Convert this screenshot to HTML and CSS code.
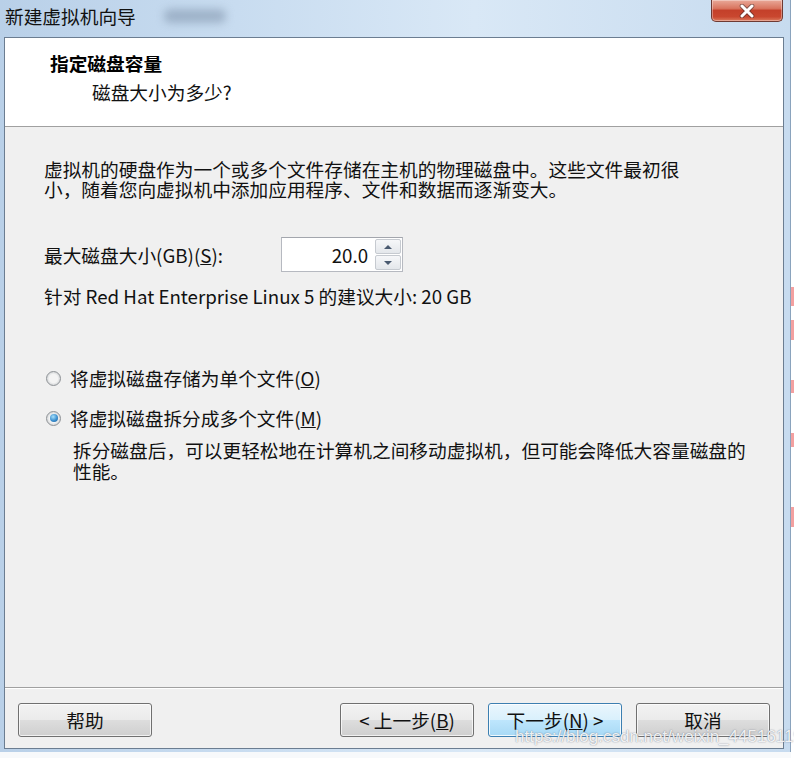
FILE: index.html
```html
<!DOCTYPE html>
<html lang="zh-CN">
<head>
<meta charset="utf-8">
<title>新建虚拟机向导</title>
<link rel="stylesheet" href="styles.css">
</head>
<body>
<div class="page">
  <div class="window">
    <div class="titlebar">
      <span class="title">新建虚拟机向导</span>
      <span class="smudge"></span>
      <button class="close" aria-label="关闭">
        <svg width="20" height="14" viewBox="0 0 20 14">
          <path d="M5 2 L15 12 M15 2 L5 12" stroke="#3a2a2a" stroke-width="4.6" stroke-linecap="round" fill="none" opacity="0.55"/>
          <path d="M5 2 L15 12 M15 2 L5 12" stroke="#ffffff" stroke-width="3" stroke-linecap="round" fill="none"/>
        </svg>
      </button>
    </div>
    <div class="content">
      <div class="header">
        <div class="h-title">指定磁盘容量</div>
        <div class="h-sub">磁盘大小为多少?</div>
      </div>
      <div class="body">
        <p class="intro">虚拟机的硬盘作为一个或多个文件存储在主机的物理磁盘中。这些文件最初很<br>小，随着您向虚拟机中添加应用程序、文件和数据而逐渐变大。</p>
        <div class="size-row">
          <span class="size-label">最大磁盘大小(GB)(<u>S</u>):</span>
          <div class="spinner">
            <span class="spin-value">20.0</span>
            <div class="spin-btns">
              <span class="spin-btn"><span class="tri-up"></span></span>
              <span class="spin-btn"><span class="tri-down"></span></span>
            </div>
          </div>
        </div>
        <p class="recommend">针对 Red Hat Enterprise Linux 5 的建议大小: 20 GB</p>
        <div class="radio-row first">
          <span class="radio"></span>
          <span>将虚拟磁盘存储为单个文件(<u>O</u>)</span>
        </div>
        <div class="radio-row second">
          <span class="radio checked"></span>
          <span>将虚拟磁盘拆分成多个文件(<u>M</u>)</span>
        </div>
        <p class="desc">拆分磁盘后，可以更轻松地在计算机之间移动虚拟机，但可能会降低大容量磁盘的<br>性能。</p>
      </div>
      <div class="footer">
        <button class="btn">帮助</button>
        <div class="spacer"></div>
        <button class="btn">&lt; 上一步(<u>B</u>)</button>
        <button class="btn primary">下一步(<u>N</u>) &gt;</button>
        <button class="btn">取消</button>
        <span class="watermark">https://blog.csdn.net/weixin_44516119</span>
      </div>
    </div>
  </div>
  <div class="edge"></div>
</div>
</body>
</html>
```
FILE: styles.css
```css
html, body {
  margin: 0;
  padding: 0;
  background: #f7f9fb;
}
body {
  font-family: "Noto Sans CJK SC", "Noto Sans", sans-serif;
  color: #111;
  font-size: 18.7px;
}
.page {
  display: flex;
  width: 794px;
  height: 758px;
  overflow: hidden;
}
.window {
  width: 791px;
  height: 752px;
  box-sizing: border-box;
  padding: 0 6px 3px 4px;
  display: flex;
  flex-direction: column;
  background: linear-gradient(to right, #b9d0e8 0%, #c8dcf0 30%, #d9e8f6 60%, #c7dbef 100%);
  border-right: 1px solid #8aa3bd;
}
.edge {
  width: 3px;
  height: 758px;
  background:
    linear-gradient(to bottom,
      #fff 0, #fff 287px, #f3a0a0 287px, #f3a0a0 306px,
      #fff 306px, #fff 320px, #f3a0a0 320px, #f3a0a0 340px,
      #fff 340px, #fff 380px, #f3a0a0 380px, #f3a0a0 393px,
      #fff 393px, #fff 433px, #f3a0a0 433px, #f3a0a0 447px,
      #fff 447px, #fff 507px, #f3a0a0 507px, #f3a0a0 527px,
      #fff 527px);
}
.titlebar {
  height: 37px;
  display: flex;
  align-items: flex-start;
  position: relative;
}
.title {
  margin: 4px 0 0 1px;
  line-height: 24px;
  font-size: 18.7px;
  color: #111;
}
.smudge {
  width: 62px;
  height: 14px;
  margin: 9px 0 0 28px;
  background: rgba(110, 130, 155, 0.45);
  filter: blur(4px);
  border-radius: 6px;
}
.close {
  position: absolute;
  right: 1px;
  top: 0;
  width: 72px;
  height: 22px;
  padding: 0;
  border: 1px solid #6e3a33;
  border-top: none;
  border-radius: 0 0 5px 5px;
  background: linear-gradient(#e9a999 0%, #d9755f 40%, #c4402a 50%, #c9472f 80%, #dc7a5d 100%);
  display: flex;
  align-items: center;
  justify-content: center;
  box-shadow: inset 0 0 0 1px rgba(255,255,255,0.35);
}
.content {
  flex: 1;
  border: 1px solid #6b7d91;
  background: #f0f0f0;
  display: flex;
  flex-direction: column;
}
.header {
  height: 89px;
  box-sizing: border-box;
  background: #fff;
  border-bottom: 1px solid #a0a0a0;
  padding: 14px 0 0 45px;
}
.h-title {
  font-weight: bold;
  line-height: 22px;
  color: #000;
}
.h-sub {
  margin: 7px 0 0 42px;
  line-height: 22px;
}
.body {
  flex: 1;
  padding: 32px 0 0 39px;
  border-bottom: 1px solid #a0a0a0;
}
.body p {
  margin: 0;
}
.intro {
  line-height: 20px;
}
.size-row {
  display: flex;
  align-items: center;
  margin-top: 38px;
  height: 35px;
}
.size-label {
  width: 237px;
}
.spinner {
  width: 122px;
  height: 35px;
  box-sizing: border-box;
  border: 1px solid #b6b9c0;
  border-top-color: #a3a6ad;
  background: #fff;
  display: flex;
  align-items: center;
  justify-content: flex-end;
  padding: 1px 1px 1px 0;
}
.spin-value {
  margin-right: 7px;
  line-height: 22px;
}
.spin-btns {
  width: 26px;
  height: 31px;
  display: flex;
  flex-direction: column;
  gap: 1px;
}
.spin-btn {
  flex: 1;
  border: 1px solid #c6cad0;
  border-radius: 2px;
  background: linear-gradient(#f6f7f9, #e4e7eb);
  display: flex;
  align-items: center;
  justify-content: center;
}
.tri-up {
  width: 0;
  height: 0;
  border-left: 4px solid transparent;
  border-right: 4px solid transparent;
  border-bottom: 4px solid #4a5a70;
}
.tri-down {
  width: 0;
  height: 0;
  border-left: 4px solid transparent;
  border-right: 4px solid transparent;
  border-top: 4px solid #4a5a70;
}
.recommend {
  margin-top: 14px !important;
  line-height: 20px;
}
.radio-row {
  display: flex;
  align-items: center;
  gap: 9px;
  line-height: 22px;
  height: 22px;
}
.radio-row.first {
  margin-top: 61px;
}
.radio-row.second {
  margin-top: 18px;
}
.radio {
  width: 15px;
  height: 15px;
  box-sizing: border-box;
  border-radius: 50%;
  border: 1px solid #8e9296;
  background: radial-gradient(circle at 50% 50%, #f4f4f4 0, #f4f4f4 45%, #d8dadc 70%, #eeeeee 100%);
  margin-left: 2px;
  display: flex;
  align-items: center;
  justify-content: center;
}
.radio.checked::after {
  content: "";
  width: 8px;
  height: 8px;
  border-radius: 50%;
  background: radial-gradient(circle at 40% 35%, #a6e0fb 0, #3b8fcf 55%, #1a5d97 100%);
}
.desc {
  margin: 10px 0 0 29px !important;
  line-height: 21px;
}
.footer {
  height: 60px;
  box-sizing: border-box;
  border-top: 1px solid #fff;
  padding: 14px 13px 0 13px;
  display: flex;
  align-items: flex-start;
  gap: 14px;
  position: relative;
}
.spacer {
  flex: 1;
}
.btn {
  width: 134px;
  height: 34px;
  box-sizing: border-box;
  border: 1px solid #707070;
  border-radius: 3px;
  background: linear-gradient(#f2f2f2 0%, #ebebeb 50%, #dddddd 51%, #cfcfcf 100%);
  box-shadow: inset 0 0 0 1px rgba(255,255,255,0.7);
  font-family: "Noto Sans CJK SC", "Noto Sans", sans-serif;
  font-size: 18.7px;
  color: #111;
  padding: 0;
  line-height: 30px;
}
.btn.primary {
  border-color: #3c7fb1;
  background: linear-gradient(#eaf6fd 0%, #d9f0fc 50%, #bee6fd 51%, #a7d9f5 100%);
  box-shadow: inset 0 0 0 1px rgba(255,255,255,0.8);
}
.watermark {
  position: absolute;
  left: 510px;
  top: 38px;
  line-height: 20px;
  font-family: "Liberation Sans", Arial, sans-serif;
  font-size: 17px;
  color: rgba(255, 255, 255, 0.9);
  text-shadow: 0 0 1px rgba(70, 80, 100, 0.6), 0 0 2px rgba(120, 130, 150, 0.4);
  white-space: nowrap;
  pointer-events: none;
}
```
